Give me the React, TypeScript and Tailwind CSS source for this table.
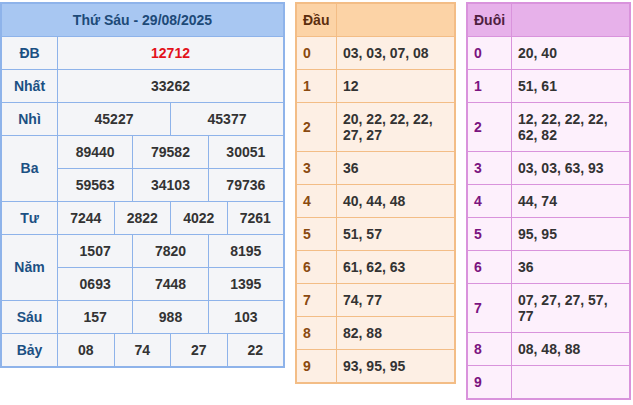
import React from "react";

const F = "font-['Liberation_Sans',Arial,sans-serif]";

function LCell({ children, span, red }: { children: React.ReactNode; span: string; red?: boolean }) {
  return (
    <div className={`${span} bg-[#f4f5f8] flex items-center justify-center h-8 text-[14px] font-bold ${red ? "text-[#e3121b]" : "text-[#333]"}`}>
      {children}
    </div>
  );
}

function Label({ children, tall }: { children: React.ReactNode; tall?: boolean }) {
  return (
    <div className={`${tall ? "row-span-2" : "h-8"} bg-[#f4f5f8] flex items-center justify-center text-[14px] font-bold text-[#1b5083]`}>
      {children}
    </div>
  );
}

function LeftTable() {
  return (
    <div className="w-[285px] border-2 border-[#8eb3ea] bg-[#8eb3ea]">
      <div className="grid grid-cols-[55px_repeat(12,minmax(0,1fr))] gap-px">
        <div className="col-span-full h-8 bg-[#a8c7f2] flex items-center justify-center text-[14px] font-bold text-[#1d4a78]">
          Thứ Sáu - 29/08/2025
        </div>
        <Label>ĐB</Label>
        <LCell span="col-span-12" red>12712</LCell>
        <Label>Nhất</Label>
        <LCell span="col-span-12">33262</LCell>
        <Label>Nhì</Label>
        <LCell span="col-span-6">45227</LCell>
        <LCell span="col-span-6">45377</LCell>
        <Label tall>Ba</Label>
        <LCell span="col-span-4">89440</LCell>
        <LCell span="col-span-4">79582</LCell>
        <LCell span="col-span-4">30051</LCell>
        <LCell span="col-span-4">59563</LCell>
        <LCell span="col-span-4">34103</LCell>
        <LCell span="col-span-4">79736</LCell>
        <Label>Tư</Label>
        <LCell span="col-span-3">7244</LCell>
        <LCell span="col-span-3">2822</LCell>
        <LCell span="col-span-3">4022</LCell>
        <LCell span="col-span-3">7261</LCell>
        <Label tall>Năm</Label>
        <LCell span="col-span-4">1507</LCell>
        <LCell span="col-span-4">7820</LCell>
        <LCell span="col-span-4">8195</LCell>
        <LCell span="col-span-4">0693</LCell>
        <LCell span="col-span-4">7448</LCell>
        <LCell span="col-span-4">1395</LCell>
        <Label>Sáu</Label>
        <LCell span="col-span-4">157</LCell>
        <LCell span="col-span-4">988</LCell>
        <LCell span="col-span-4">103</LCell>
        <Label>Bảy</Label>
        <LCell span="col-span-3">08</LCell>
        <LCell span="col-span-3">74</LCell>
        <LCell span="col-span-3">27</LCell>
        <LCell span="col-span-3">22</LCell>
      </div>
    </div>
  );
}

type Theme = {
  border: string;
  header: string;
  cell: string;
  label: string;
  headText: string;
  cols: string;
  width: string;
};

function SideTable({ title, rows, t }: { title: string; rows: string[]; t: Theme }) {
  return (
    <div className={`${t.width} border-2 ${t.border}`}>
      <div className={`grid ${t.cols} gap-px`}>
        <div className={`${t.header} ${t.headText} h-8 flex items-center pl-[6px] text-[14px] font-bold`}>{title}</div>
        <div className={`${t.header} h-8`} />
        {rows.map((v, i) => (
          <React.Fragment key={i}>
            <div className={`${t.cell} ${t.label} flex items-center pl-[6px] text-[14px] font-bold min-h-8`}>{i}</div>
            <div className={`${t.cell} text-[#333] flex items-center pl-[6px] pr-[8px] py-2 leading-4 text-[14px] font-bold min-h-8`}>
              {v}
            </div>
          </React.Fragment>
        ))}
      </div>
    </div>
  );
}

export default function App() {
  const dau = [
    "03, 03, 07, 08",
    "12",
    "20, 22, 22, 22, 27, 27",
    "36",
    "40, 44, 48",
    "51, 57",
    "61, 62, 63",
    "74, 77",
    "82, 88",
    "93, 95, 95",
  ];
  const duoi = [
    "20, 40",
    "51, 61",
    "12, 22, 22, 22, 62, 82",
    "03, 03, 63, 93",
    "44, 74",
    "95, 95",
    "36",
    "07, 27, 27, 57, 77",
    "08, 48, 88",
    "",
  ];
  return (
    <div className={`${F} w-[633px] h-[405px] bg-white flex items-start gap-[10px] pt-[2px]`}>
      <LeftTable />
      <SideTable
        title="Đầu"
        rows={dau}
        t={{
          border: "border-[#f3bd86] bg-[#f3bd86]",
          header: "bg-[#fcd3a6]",
          cell: "bg-[#fdefe4]",
          label: "text-[#8a4a10]",
          headText: "text-[#5c2e0e]",
          cols: "grid-cols-[39px_minmax(0,1fr)]",
          width: "w-[161px]",
        }}
      />
      <SideTable
        title="Đuôi"
        rows={duoi}
        t={{
          border: "border-[#d993dc] bg-[#d993dc]",
          header: "bg-[#e7b1ea]",
          cell: "bg-[#fdf0fc]",
          label: "text-[#7b1480]",
          headText: "text-[#4f1f3f]",
          cols: "grid-cols-[43px_minmax(0,1fr)]",
          width: "w-[165px]",
        }}
      />
    </div>
  );
}
